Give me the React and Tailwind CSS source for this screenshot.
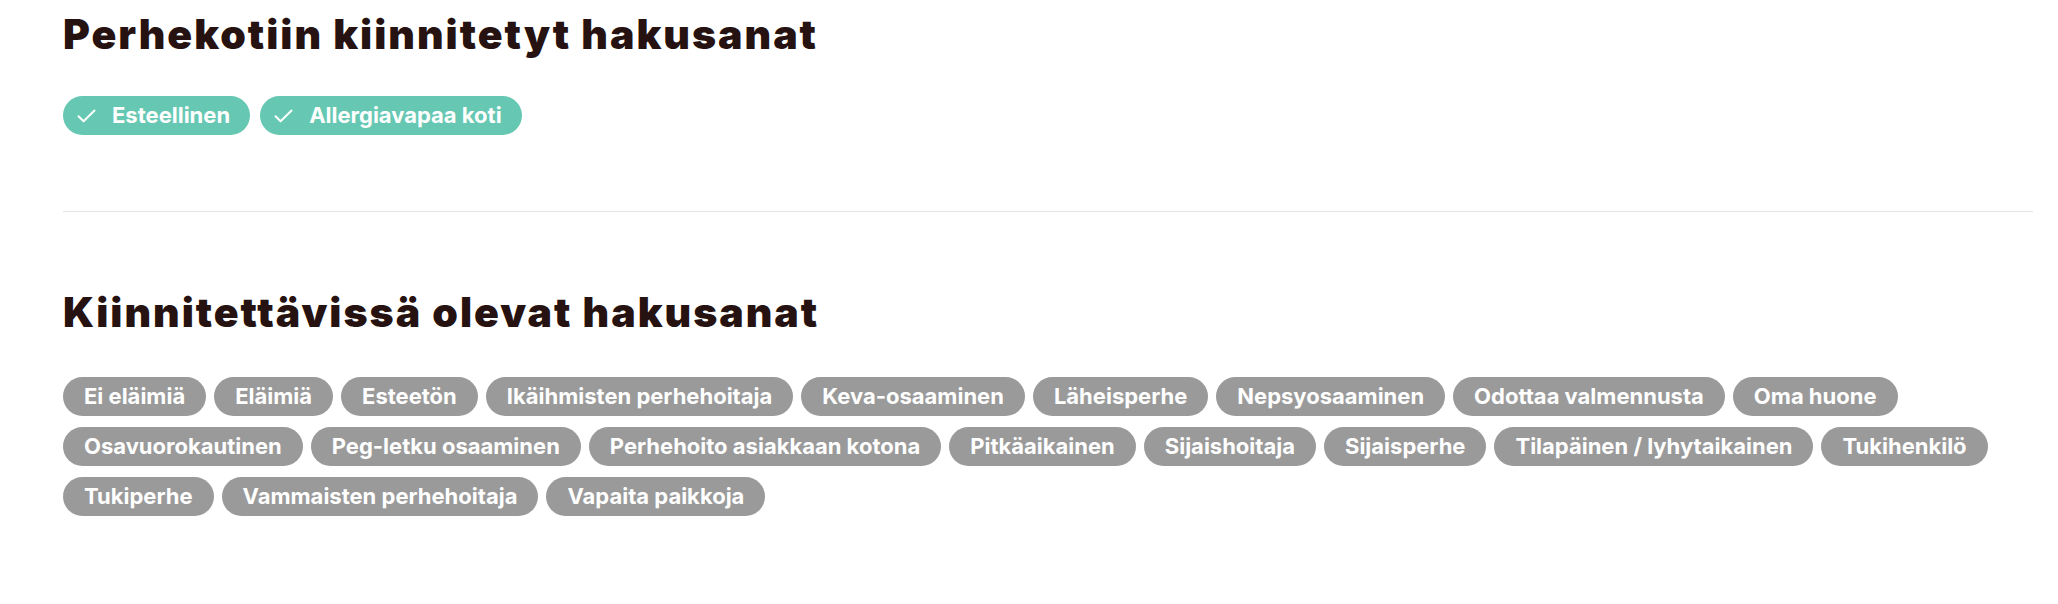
import React from 'react';

const pinned = ['Esteellinen', 'Allergiavapaa koti'];

const available = [
  'Ei eläimiä',
  'Eläimiä',
  'Esteetön',
  'Ikäihmisten perhehoitaja',
  'Keva-osaaminen',
  'Läheisperhe',
  'Nepsyosaaminen',
  'Odottaa valmennusta',
  'Oma huone',
  'Osavuorokautinen',
  'Peg-letku osaaminen',
  'Perhehoito asiakkaan kotona',
  'Pitkäaikainen',
  'Sijaishoitaja',
  'Sijaisperhe',
  'Tilapäinen / lyhytaikainen',
  'Tukihenkilö',
  'Tukiperhe',
  'Vammaisten perhehoitaja',
  'Vapaita paikkoja',
];

const CheckIcon = () => (
  <svg width="19" height="14" viewBox="0 0 19 14" fill="none">
    <path
      d="M1.5 7.2 6.6 12.3 17.5 1.5"
      stroke="white"
      strokeWidth="2"
      strokeLinecap="round"
      strokeLinejoin="round"
    />
  </svg>
);

const headingFont = { fontFamily: 'Inter, "Noto Sans", sans-serif' };

const App = () => {
  return (
    <div
      className="min-h-[604px] bg-white pl-[63px] pr-[25px] pt-[10px]"
      style={{ fontFamily: 'Inter, "Noto Sans", sans-serif' }}
    >
      <h1
        className="text-[41px] leading-[48px] font-black tracking-[2px] text-[#261210]"
        style={headingFont}
      >
        Perhekotiin kiinnitetyt hakusanat
      </h1>
      <div className="mt-[38px] flex flex-wrap gap-[10px]">
        {pinned.map((tag) => (
          <button
            key={tag}
            className="flex h-[39px] items-center gap-[16px] rounded-full bg-[#66c8b3] pl-[14px] pr-[20px] text-[22px] font-bold text-white"
          >
            <CheckIcon />
            {tag}
          </button>
        ))}
      </div>

      <div className="mt-[76px] h-px bg-[#e4e4e4]" />

      <h2
        className="mt-[76px] text-[41px] leading-[48px] font-black tracking-[2px] text-[#261210]"
        style={headingFont}
      >
        Kiinnitettävissä olevat hakusanat
      </h2>
      <div className="mt-[41px] flex flex-wrap gap-x-[8px] gap-y-[11px]">
        {available.map((tag) => (
          <button
            key={tag}
            className="flex h-[39px] items-center rounded-full bg-[#9a9a9a] px-[21px] text-[22px] font-bold text-white"
          >
            {tag}
          </button>
        ))}
      </div>
    </div>
  );
};

export default App;
